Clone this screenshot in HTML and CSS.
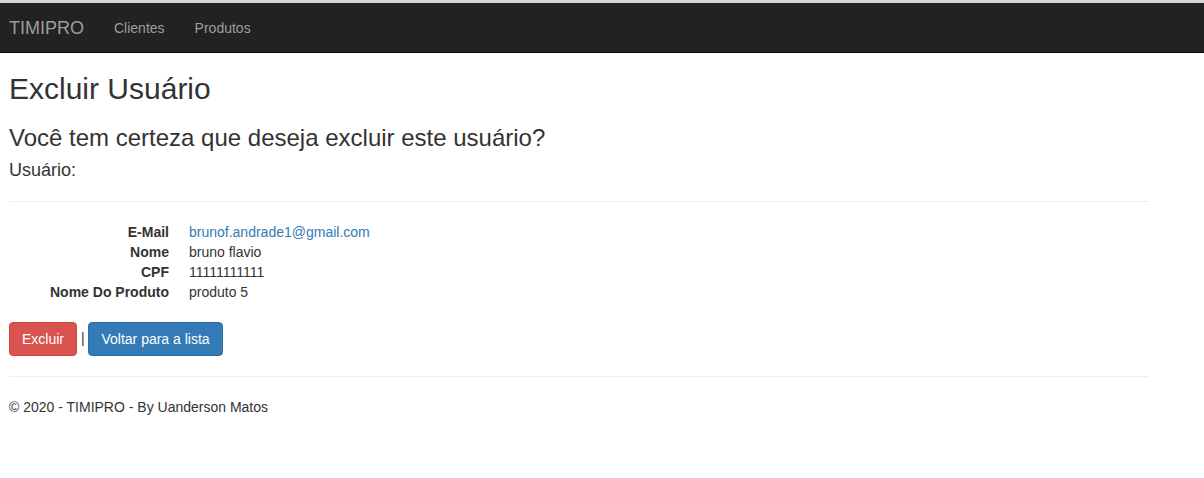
FILE: index.html
```html
<!DOCTYPE html>
<html lang="pt-BR">
<head>
<meta charset="utf-8">
<title>Excluir Usuário - TIMIPRO</title>
<link rel="stylesheet" href="styles.css">
</head>
<body>
<div class="top-strip"></div>
<nav class="navbar">
  <div class="container nav-inner">
    <a class="brand" href="#">TIMIPRO</a>
    <ul class="nav-links">
      <li><a href="#">Clientes</a></li>
      <li><a href="#">Produtos</a></li>
    </ul>
  </div>
</nav>
<main class="container body-content">
  <h2 class="title">Excluir Usuário</h2>
  <h3 class="question">Você tem certeza que deseja excluir este usuário?</h3>
  <div>
    <h4 class="subtitle">Usuário:</h4>
    <hr class="rule">
    <dl class="details">
      <dt>E-Mail</dt>
      <dd><a href="#">brunof.andrade1@gmail.com</a></dd>
      <dt>Nome</dt>
      <dd>bruno flavio</dd>
      <dt>CPF</dt>
      <dd>11111111111</dd>
      <dt>Nome Do Produto</dt>
      <dd>produto 5</dd>
    </dl>
    <form class="form-actions">
      <button type="button" class="btn btn-danger">Excluir</button> |
      <a href="#" class="btn btn-primary">Voltar para a lista</a>
    </form>
  </div>
  <hr class="rule">
  <footer>
    <p class="footer-text">© 2020 - TIMIPRO - By Uanderson Matos</p>
  </footer>
</main>
</body>
</html>
```

FILE: styles.css
```css
* {
  box-sizing: border-box;
}

html, body {
  margin: 0;
  padding: 0;
  background: #fff;
}

body {
  font-family: "Liberation Sans", Arial, Helvetica, sans-serif;
  font-size: 14px;
  line-height: 20px;
  color: #333;
}

a {
  color: #337ab7;
  text-decoration: none;
}

.top-strip {
  height: 3px;
  background: #d6d6d6;
}

.container {
  width: 1140px;
  margin-left: 9px;
}

.navbar {
  height: 50px;
  background: #222;
  border-bottom: 1px solid #080808;
}

.nav-inner {
  display: flex;
  align-items: stretch;
  height: 49px;
}

.brand {
  font-size: 18px;
  line-height: 20px;
  padding: 15px 15px 14px 0;
  color: #9d9d9d;
}

.nav-links {
  list-style: none;
  margin: 0;
  padding: 0;
  display: flex;
}

.nav-links a {
  display: block;
  padding: 15px 15px 14px;
  line-height: 20px;
  color: #9d9d9d;
}

.body-content {
  padding-top: 1px;
}

.title {
  font-size: 30px;
  font-weight: 500;
  line-height: 33px;
  margin: 18px 0 10px;
}

.question {
  font-size: 24px;
  font-weight: 500;
  line-height: 26.4px;
  margin: 20px 0 10px;
}

.subtitle {
  font-size: 18px;
  font-weight: 500;
  line-height: 19.8px;
  margin: 10px 0 10px;
}

.rule {
  margin: 20px 0;
  border: 0;
  border-top: 1px solid #eee;
  height: 0;
}

.details {
  display: grid;
  grid-template-columns: 160px 1fr;
  column-gap: 20px;
  margin: 0 0 20px;
}

.details dt {
  font-weight: bold;
  text-align: right;
  white-space: nowrap;
}

.details dd {
  margin: 0;
}

.form-actions {
  margin: 0;
}

.btn {
  display: inline-block;
  font-family: inherit;
  font-size: 14px;
  line-height: 20px;
  padding: 6px 12px;
  border: 1px solid transparent;
  border-radius: 4px;
  color: #fff;
  cursor: pointer;
  vertical-align: middle;
}

.btn-danger {
  background: #d9534f;
  border-color: #d43f3a;
}

.btn-primary {
  background: #337ab7;
  border-color: #2e6da4;
}

.footer-text {
  margin: 0 0 10px;
}
```
